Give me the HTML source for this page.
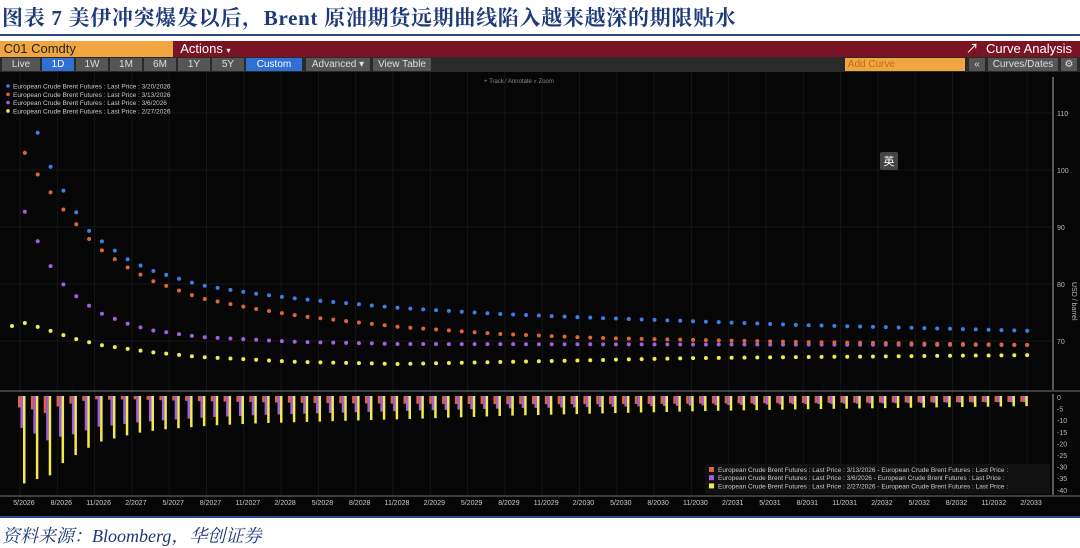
<!DOCTYPE html>
<html><head><meta charset="utf-8">
<style>
body{margin:0;width:1080px;height:546px;background:#fff;position:relative;overflow:hidden;font-family:"Liberation Sans","Noto Sans CJK SC",sans-serif}
.t{position:absolute;left:2px;top:2px;font:bold 21px "Liberation Serif","Noto Serif CJK SC",serif;color:#1f3a78;white-space:nowrap;letter-spacing:0.7px}
.ln{position:absolute;left:0;width:1080px;height:2px;background:#2c4a8a}
.hd{position:absolute;top:41px;height:16px;font-size:13px;line-height:16px;white-space:nowrap}
.tb{position:absolute;top:57px;left:0;width:1080px;height:15px;background:#2a2a2a}
.b{position:absolute;top:58px;height:13px;background:#555;color:#ddd;font-size:10px;line-height:13px;text-align:center}
.f{position:absolute;left:2px;top:522px;font:italic 18px "Liberation Serif","Noto Serif CJK SC",serif;color:#1f3a78}
</style></head><body>
<div class="t">图表 7 美伊冲突爆发以后，Brent 原油期货远期曲线陷入越来越深的期限贴水</div>
<div class="ln" style="top:34px"></div>
<div class="hd" style="left:0;width:173px;background:#f0a640;color:#222">&nbsp;C01 Comdty</div>
<div class="hd" style="left:173px;width:907px;background:#7a1424;color:#fff">&nbsp;&nbsp;Actions <span style="font-size:8px">▾</span><span style="position:absolute;right:8px">&#x2197;&nbsp;&nbsp;Curve Analysis</span></div>
<div class="tb"></div>
<div class="b" style="left:2px;width:38px">Live</div>
<div class="b" style="left:42px;width:32px;background:#2f6fd6;color:#fff">1D</div>
<div class="b" style="left:76px;width:32px">1W</div>
<div class="b" style="left:110px;width:32px">1M</div>
<div class="b" style="left:144px;width:32px">6M</div>
<div class="b" style="left:178px;width:32px">1Y</div>
<div class="b" style="left:212px;width:32px">5Y</div>
<div class="b" style="left:246px;width:56px;background:#2f6fd6;color:#fff">Custom</div>
<div class="b" style="left:306px;width:64px">Advanced ▾</div>
<div class="b" style="left:373px;width:58px">View Table</div>
<div class="b" style="left:845px;width:120px;background:#f0a640;color:#c46a1a;text-align:left">&nbsp;Add Curve</div>
<div class="b" style="left:969px;width:16px">«</div>
<div class="b" style="left:988px;width:70px">Curves/Dates</div>
<div class="b" style="left:1061px;width:16px">⚙</div>
<svg style="position:absolute;left:0;top:72px" width="1080" height="445" id="s"></svg>
<div class="ln" style="top:516px"></div>
<div class="f">资料来源：Bloomberg，华创证券</div>
<script>
var s=document.getElementById('s'),o='<rect width="1080" height="445" fill="#060606"/>';
function Y(y){return y-72}
for(var x=20;x<1050;x+=37.3)o+='<line x1="'+x+'" y1="0" x2="'+x+'" y2="423" stroke="#161616"/>';
[113,170,227,284,341].forEach(function(y){o+='<line x1="0" y1="'+Y(y)+'" x2="1052" y2="'+Y(y)+'" stroke="#161616"/>'});
o+='<line x1="1053" y1="5" x2="1053" y2="318" stroke="#aaa"/><line x1="1053" y1="322" x2="1053" y2="423" stroke="#aaa"/>';
o+='<line x1="0" y1="319" x2="1080" y2="319" stroke="#777"/><line x1="0" y1="424" x2="1080" y2="424" stroke="#777"/>';
[[113,'110'],[170,'100'],[227,'90'],[284,'80'],[341,'70']].forEach(function(a){o+='<text x="1057" y="'+(Y(a[0])+3)+'" fill="#bbb" font-size="7">'+a[1]+'</text>'});
o+='<text x="1072" y="210" fill="#bbb" font-size="7" transform="rotate(90 1072 210)">USD / barrel</text>';
for(var k=0;k<=8;k++){var yy=397+k*11.6;o+='<text x="1057" y="'+(Y(yy)+3)+'" fill="#bbb" font-size="7">'+(k?'-'+k*5:'0')+'</text>'}
var labs=[];for(var yr=2026,m=5;!(yr==2033&&m>2);){labs.push(m+'/'+yr);m+=3;if(m>12){m-=12;yr++}}
labs.forEach(function(l,i){o+='<text x="'+(24+i*37.3)+'" y="'+Y(505)+'" fill="#ccc" font-size="7" text-anchor="middle">'+l+'</text>'});
var C={b:[[12,112],[25,120],[38,133],[51,168],[63,190],[76,212],[88,230],[100,240],[125,258],[150,270],[200,285],[250,293],[300,299],[400,308],[500,314],[600,318],[800,325],[1038,331]],
r:[[12,140],[25,153],[38,175],[51,193],[63,209],[76,224],[88,238],[100,249],[125,266],[150,280],[200,298],[250,308],[300,316],[400,327],[500,334],[600,338],[800,342],[1038,345]],
p:[[12,190],[25,212],[38,242],[51,267],[63,284],[76,296],[88,305],[100,313],[125,323],[150,330],[200,337],[300,342],[400,344],[1038,345]],
y:[[12,326],[25,323],[38,327],[51,331],[63,335],[76,339],[100,345],[150,352],[200,357],[300,362],[400,364],[500,362],[700,358],[1038,355]]};
function f(a,x){for(var i=1;i<a.length;i++)if(x<=a[i][0]){var t=(x-a[i-1][0])/(a[i][0]-a[i-1][0]);return a[i-1][1]+t*(a[i][1]-a[i-1][1])}return a[a.length-1][1]}
function v(y){return 70-(y-341)/5.7}
var cols={b:'#3a7ee8',r:'#e0643a',p:'#a060e0',y:'#f0ea50'};
var xs=[];for(var i=0;i<80;i++)xs.push(12+i*12.85);
var st={b:38,r:25,p:25,y:12};
['y','p','r','b'].forEach(function(k){xs.forEach(function(x){if(x<st[k]-1)return;o+='<circle cx="'+x+'" cy="'+Y(f(C[k],x))+'" r="2" fill="'+cols[k]+'"/>'})});
xs.forEach(function(x,i){if(i>78)return;var bx=x+10;var vb=v(f(C.b,x));[['r',-4],['p',-1.5],['y',1]].forEach(function(a){var d=vb-v(f(C[a[0]],x));var h=Math.max(d*2.33,1);o+='<rect x="'+(bx+a[1])+'" y="'+Y(396)+'" width="2.5" height="'+h+'" fill="'+cols[a[0]]+'"/>'})});
var L=['European Crude Brent Futures : Last Price : 3/20/2026','European Crude Brent Futures : Last Price : 3/13/2026','European Crude Brent Futures : Last Price : 3/6/2026','European Crude Brent Futures : Last Price : 2/27/2026'],LC=['b','r','p','y'];
L.forEach(function(t,i){o+='<circle cx="8" cy="'+(14+i*8.3)+'" r="1.8" fill="'+cols[LC[i]]+'"/><text x="13" y="'+(16.5+i*8.3)+'" fill="#ccc" font-size="6.5">'+t+'</text>'});
o+='<text x="484" y="11" fill="#888" font-size="6">+ Track   ⁄ Annotate   ⌕ Zoom</text>';
o+='<rect x="880" y="80" width="18" height="18" rx="2" fill="#444"/><text x="889" y="93" fill="#fff" font-size="11" text-anchor="middle">英</text>';
o+='<rect x="705" y="392" width="345" height="30" fill="#111"/>';
['3/13/2026','3/6/2026','2/27/2026'].forEach(function(d,i){o+='<rect x="709" y="'+(395+i*8.2)+'" width="5" height="5" fill="'+cols[['r','p','y'][i]]+'"/><text x="718" y="'+(400+i*8.2)+'" fill="#ccc" font-size="6.5">European Crude Brent Futures : Last Price : '+d+' - European Crude Brent Futures : Last Price :</text>'});
s.innerHTML=o;
</script>
</body></html>
